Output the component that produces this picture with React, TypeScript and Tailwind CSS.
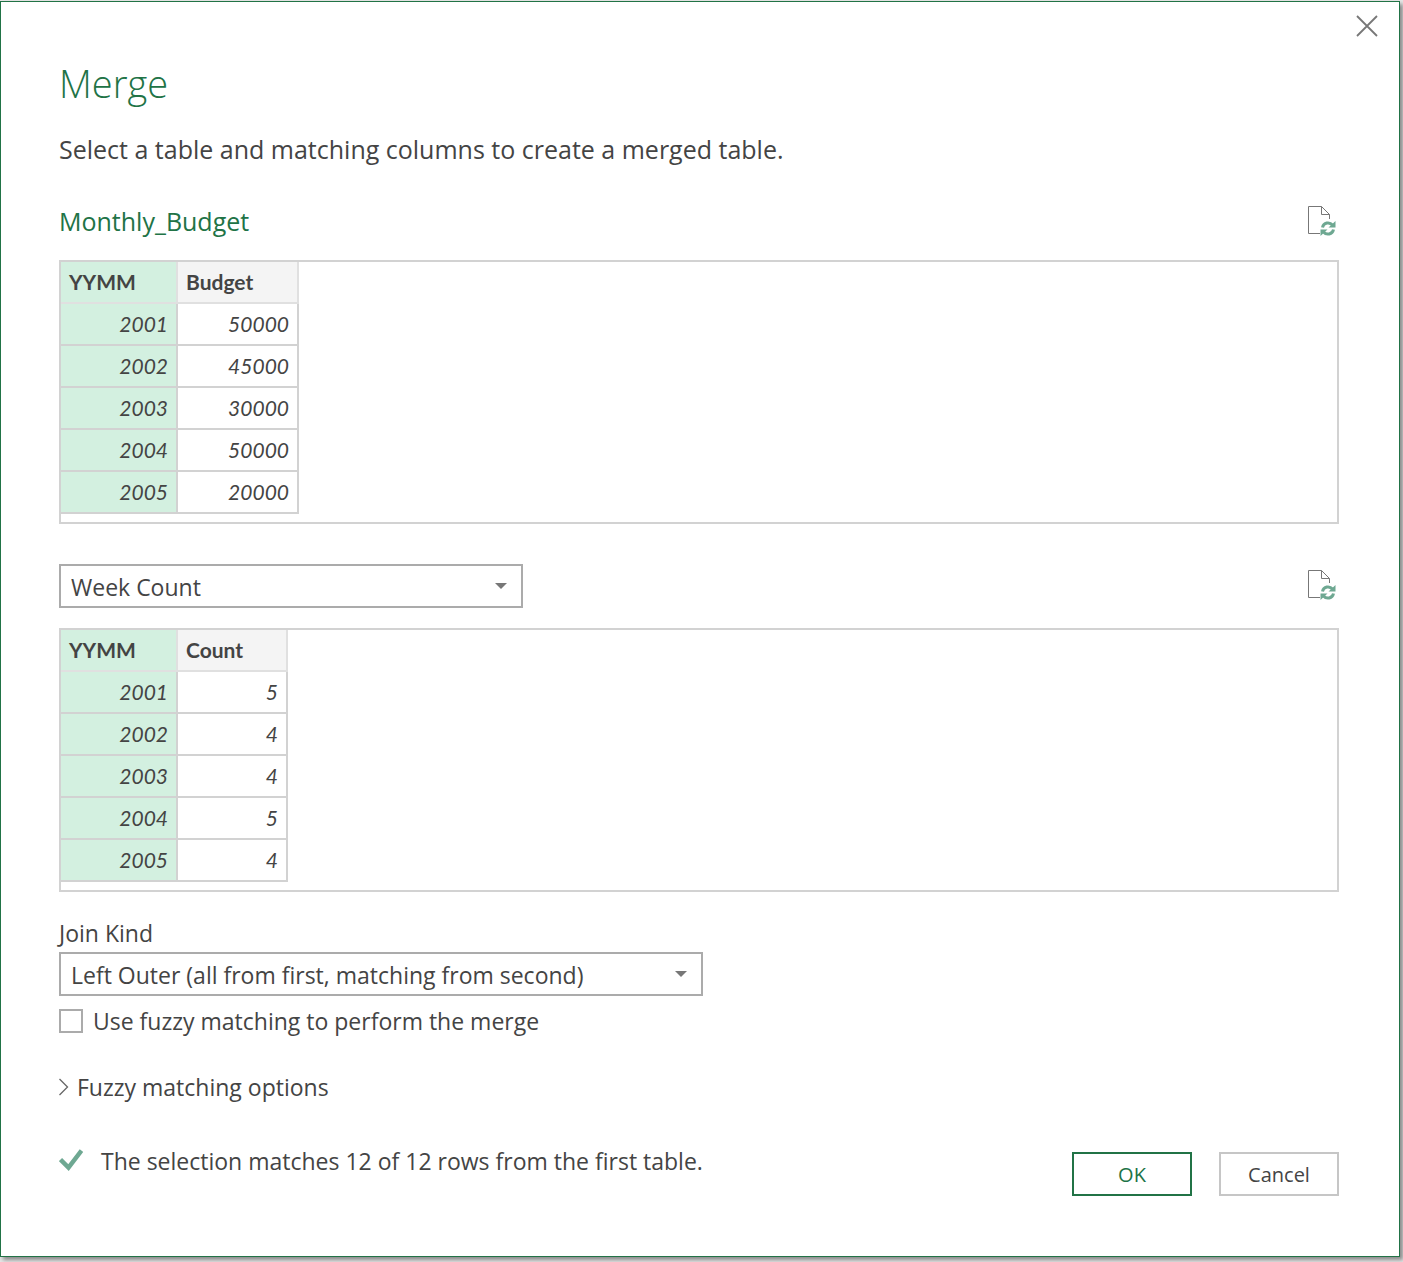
import { useState } from 'react';

type PreviewProps = { label: string; columns: [string, string]; rows: [string, string][]; valueWidth: string };

const budgetRows: [string, string][] = [
  ['2001', '50000'],
  ['2002', '45000'],
  ['2003', '30000'],
  ['2004', '50000'],
  ['2005', '20000'],
];

const weekRows: [string, string][] = [
  ['2001', '5'],
  ['2002', '4'],
  ['2003', '4'],
  ['2004', '5'],
  ['2005', '4'],
];

function PreviewTable({ label, columns, rows, valueWidth }: PreviewProps) {
  return (
    <div className="border-2 border-[#d2d2d2] pb-2">
      <table aria-label={label} className="table-fixed border-separate border-spacing-0 font-['Lato','Open_Sans',sans-serif] text-[21px] leading-10">
        <thead>
          <tr className="text-left">
            <th scope="col" className="w-[117px] border-r-2 border-b-2 border-[#e0e0e0] bg-[#d3f0e0] px-2 py-0 font-bold">
              {columns[0]}
            </th>
            <th scope="col" className={`${valueWidth} border-r-2 border-b-2 border-[#e0e0e0] bg-[#f4f4f4] px-2 py-0 font-bold`}>
              {columns[1]}
            </th>
          </tr>
        </thead>
        <tbody>
          {rows.map(([key, value]) => (
            <tr key={key} className="text-right italic">
              <td className="border-r-2 border-b-2 border-[#d2d2d2] bg-[#d3f0e0] px-2 py-0">{key}</td>
              <td className="border-r-2 border-b-2 border-[#d2d2d2] px-2 py-0">{value}</td>
            </tr>
          ))}
        </tbody>
      </table>
    </div>
  );
}

function RefreshButton({ label }: { label: string }) {
  return (
    <button type="button" aria-label={label} className="mr-[3px] shrink-0">
      <svg width="28" height="32" viewBox="0 1 28 32" fill="none">
        <path d="M12 28.5H.5V1.500H13.500L21.500 9.500V14" stroke="#777" />
        <path d="M13.500 1.500V9.500H21.500" stroke="#777" />
        <g stroke="#6ea892" strokeWidth="3">
          <path d="M14.500 22.500C15.500 17.500 21.500 16.500 24.500 20" />
          <path d="M25.500 24.500C24.500 29.500 18.500 30.500 15.500 27" />
        </g>
        <path d="M27.500 16V22.500H20.500Z" fill="#6ea892" />
        <path d="M12.500 31V24.500H19.500Z" fill="#6ea892" />
      </svg>
    </button>
  );
}

function DropDown({ id, label, width, options }: { id: string; label?: string; width: string; options: string[] }) {
  return (
    <div className={`relative max-w-full ${width}`}>
      <select
        id={id}
        aria-label={label}
        className="block h-11 w-full appearance-none rounded-none border-2 border-[#ababab] bg-white pt-0.5 pr-10 pl-[10px] text-[23px]"
      >
        {options.map((o) => (
          <option key={o}>{o}</option>
        ))}
      </select>
      <svg className="pointer-events-none absolute top-[19px] right-4" width="12" height="6" viewBox="0 0 12 6" fill="#777">
        <path d="M0 0H12L6 6Z" />
      </svg>
    </div>
  );
}

export default function App() {
  const [fuzzy, setFuzzy] = useState(false);
  return (
    <div className="flex min-h-screen bg-[#e6e6e6] pt-px pr-[3px] pb-[5px] font-['Open_Sans','Noto_Sans',sans-serif] text-[#444]">
      <main
        role="dialog"
        aria-labelledby="title"
        className="relative flex-1 border border-[#217346] bg-white pr-[60px] pl-[58px] shadow-[3px_3px_4px_rgba(0,0,0,0.4)]"
      >
        <button type="button" aria-label="Close" className="absolute top-[13px] right-[21px]">
          <svg width="22" height="22" viewBox="0 0 22 22" stroke="#777" strokeWidth="1.800">
            <path d="M1 1L21 21M21 1L1 21" />
          </svg>
        </button>

        <h1 id="title" className="pt-14 text-[38px] leading-[50px] font-light text-[#217346]">Merge</h1>
        <p className="mt-[21px] text-[25px] leading-10">Select a table and matching columns to create a merged table.</p>

        <div className="mt-[33px] flex h-10 items-center justify-between">
          <h2 className="text-[25px] text-[#217346]">Monthly_Budget</h2>
          <RefreshButton label="Refresh Monthly_Budget preview" />
        </div>
        <div className="mt-[18px]">
          <PreviewTable label="Monthly_Budget" columns={['YYMM', 'Budget']} rows={budgetRows} valueWidth="w-[121px]" />
        </div>

        <div className="mt-10 flex items-center justify-between">
          <DropDown id="second" label="Second table" width="w-[464px]" options={['Week Count', 'Monthly_Budget']} />
          <RefreshButton label="Refresh Week Count preview" />
        </div>
        <div className="mt-5">
          <PreviewTable label="Week Count" columns={['YYMM', 'Count']} rows={weekRows} valueWidth="w-[110px]" />
        </div>

        <label htmlFor="join" className="mt-[23px] mb-px block text-[23px] leading-9">Join Kind</label>
        <DropDown
          id="join"
          width="w-[644px]"
          options={[
            'Left Outer (all from first, matching from second)',
            'Right Outer (all from second, matching from first)',
            'Full Outer (all rows from both)',
            'Inner (only matching rows)',
          ]}
        />
        <label className="mt-[7px] flex items-center gap-[10px] text-[23px] leading-9">
          <input
            type="checkbox"
            checked={fuzzy}
            onChange={(e) => setFuzzy(e.target.checked)}
            className="size-6 appearance-none border-2 border-[#ababab] bg-white checked:bg-[#217346]"
          />
          Use fuzzy matching to perform the merge
        </label>
        <button type="button" aria-expanded="false" className="mt-[30px] flex items-center gap-2 text-[23px] leading-9">
          <svg width="10" height="18" viewBox="0 0 10 18" fill="none" stroke="#666" strokeWidth="1.300">
            <path d="M.5 1L8.500 9L.5 17" />
          </svg>
          Fuzzy matching options
        </button>

        <div className="mt-[38px] flex items-start justify-between">
          <p className="flex items-center gap-[18px] text-[23px] leading-9">
            <svg width="24" height="24" viewBox="0 0 24 24" fill="none" stroke="#6ea892" strokeWidth="4.500">
              <path d="M1.500 10.500L9.500 18.500L22.500 1.500" />
            </svg>
            The selection matches 12 of 12 rows from the first table.
          </p>
          <div className="mt-[9px] flex gap-[27px] text-[20px]">
            <button type="button" className="h-11 w-[120px] border-2 border-[#217346] pt-0.5 text-[#217346]">OK</button>
            <button type="button" className="h-11 w-[120px] border-2 border-[#c6c6c6] pt-0.5">Cancel</button>
          </div>
        </div>
      </main>
    </div>
  );
}
